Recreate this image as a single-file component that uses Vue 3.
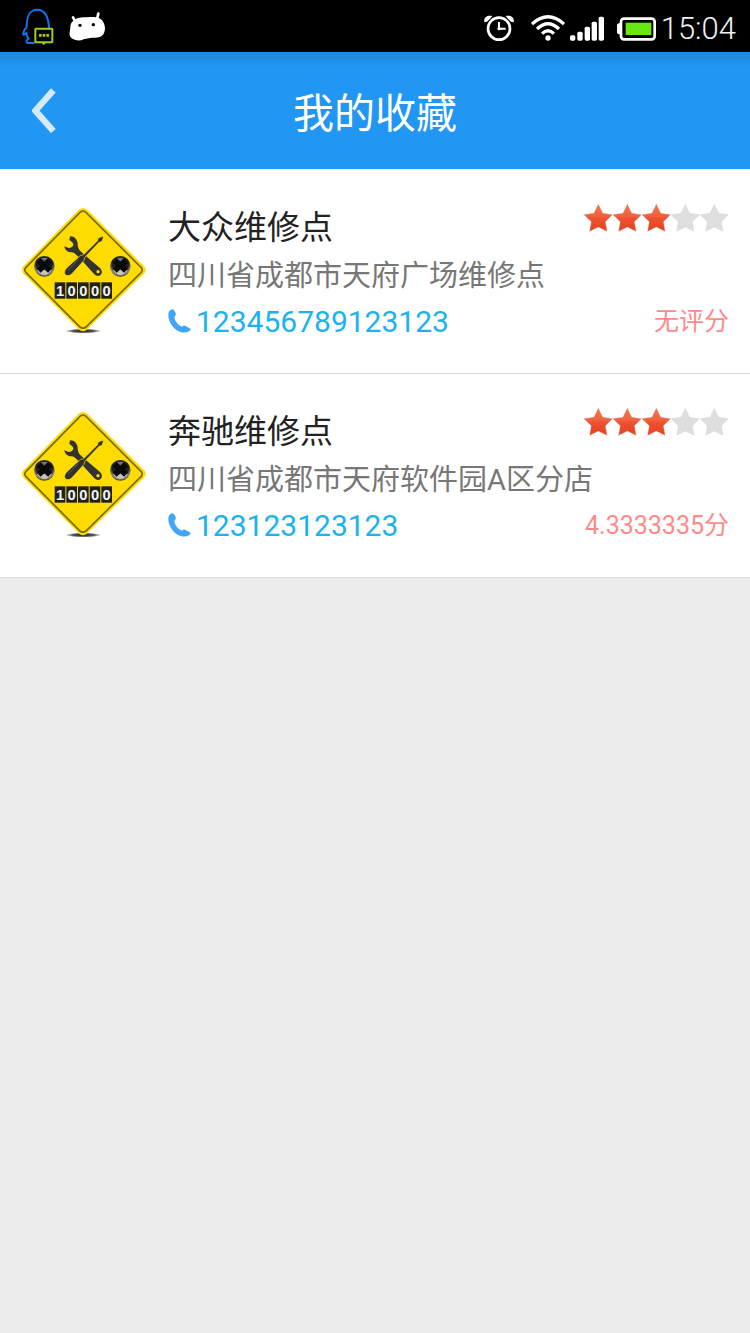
<template>
  <div class="page">
    <div class="status-bar">
      <div class="status-left">
        <svg class="icon-qq" viewBox="66 22 96 111" fill="none">
          <path d="M80 80 C80 45 88 27 112 27 C135 27 145 45 147 82 M80 80 C74 86 69 96 70 102 C72 104 76 99 79 97 C80 105 82 110 86 114 C78 119 77 126 84 127 L104 127" stroke="#0a78f0" stroke-width="6" />
          <rect x="106" y="84" width="51" height="41" rx="2" fill="#000" stroke="#a2cc14" stroke-width="6" />
          <path d="M124 126 L131 133 L138 126 Z" fill="#a2cc14" />
          <path d="M117 100h8v8h-8z M128 100h8v8h-8z M139 100h8v8h-8z" fill="#a2cc14" />
        </svg>
        <svg class="icon-android" viewBox="207 33 111 87">
          <path d="M219 49 L226 62 M295 38 L291 55" stroke="#fff" stroke-width="8" stroke-linecap="round" />
          <path d="M217 62 C229 49 246 49 260 49 C277 48 293 47 303 55 C313 63 317 80 314 90 C311 104 300 111 284 110 C272 110 261 112 251 115 C240 121 224 119 214 111 C205 103 210 90 211 81 C211 72 212 67 217 62 Z" fill="#fff" />
          <circle cx="240" cy="73" r="5" fill="#000" />
          <circle cx="280" cy="71" r="5" fill="#000" />
        </svg>
      </div>
      <div class="status-right">
        <svg class="icon-alarm" viewBox="42 43 93 78" fill="none" stroke="#fff">
          <circle cx="87" cy="84" r="33" stroke-width="8" />
          <path d="M87 64 V84 H107" stroke-width="6" />
          <circle cx="87" cy="84" r="5" fill="#fff" stroke="none" />
          <path d="M43 65 C40 50 52 42 67 46 L60 54 L51 63 Z M131 65 C134 50 122 42 107 46 L114 54 L123 63 Z" fill="#fff" stroke="none" />
        </svg>
        <svg class="icon-wifi" viewBox="183 43 102 78" fill="none" stroke="#fff" stroke-width="10">
          <path d="M186 70 Q234 27 282 70" />
          <path d="M201 85 Q234 53 267 85" />
          <path d="M216 99 Q234 81 252 99" />
          <circle cx="234" cy="112" r="8" fill="#fff" stroke="none" />
        </svg>
        <svg class="icon-signal" viewBox="300 43 102 78" fill="#fff">
          <rect x="300" y="104" width="16" height="16" rx="5" />
          <rect x="322" y="93" width="16" height="27" rx="5" />
          <rect x="344" y="78" width="16" height="42" rx="5" />
          <rect x="365" y="63" width="16" height="57" rx="5" />
          <rect x="386" y="48" width="16" height="72" rx="5" />
        </svg>
        <svg class="icon-battery" viewBox="441 43 117 78">
          <rect x="441" y="68" width="16" height="33" rx="6" fill="#fff" />
          <rect x="453" y="54" width="101" height="62" rx="9" fill="#000" stroke="#fff" stroke-width="8" />
          <rect x="467" y="66" width="77" height="37" fill="#68e810" />
        </svg>
        <span class="time">15:04</span>
      </div>
    </div>

    <header class="header">
      <button class="back" type="button" aria-label="返回">
        <svg viewBox="94 127 72 135">
          <path d="M158 134 L104 195 L158 256" fill="none" stroke="#d6eafd" stroke-width="19" />
        </svg>
      </button>
      <h1 class="title">我的收藏</h1>
    </header>

    <ul class="list">
      <li v-for="shop in shops" :key="shop.id" class="item">
        <svg class="sign" viewBox="30 36 384 384">
          <defs>
            <radialGradient id="bolt" cx="50%" cy="35%" r="65%">
              <stop offset="0" stop-color="#3a3a3a" />
              <stop offset="0.6" stop-color="#1c1c1c" />
              <stop offset="0.85" stop-color="#8d8a80" />
              <stop offset="1" stop-color="#403c20" />
            </radialGradient>
            <radialGradient id="ground">
              <stop offset="0" stop-color="#222" />
              <stop offset="0.6" stop-color="#555" />
              <stop offset="1" stop-color="#fff" />
            </radialGradient>
          </defs>
          <ellipse cx="220" cy="408" rx="54" ry="7" fill="url(#ground)" />
          <path d="M206 44 Q219 34 232 44 L402 213 Q412 224 402 236 L232 403 Q219 415 206 403 L41 236 Q31 224 41 213 Z" fill="#ffdc00" />
          <path d="M210 52 Q219 45 228 52 L393 217 Q400 225 393 233 L228 396 Q219 403 210 396 L48 233 Q41 225 48 217 Z" fill="none" stroke="#7a6a10" stroke-width="5" />
          <path d="M180 124 C192 123 203 134 203 147 C203 155 205 161 210 167 L224 180 L269 218 C280 228 277 241 264 243 Q258 243 253 238 L209 189 L195 176 C190 171 186 173 180 172 C171 170 164 164 163 154 L176 159 Q187 158 190 150 Q191 143 178 135 Z" fill="#333" />
          <circle cx="264" cy="230" r="5" fill="#ffdc00" />
          <path d="M264 130 L277 124 L280 128 L275 140 L268 141 L225 186 L222 196 L187 235 C179 244 168 243 165 238 C162 230 165 224 173 216 L212 181 L220 180 L263 137 Z" fill="#303030" stroke="#ffdc00" stroke-width="2" />
          <path d="M174 226 L205 193" stroke="#5a5a5a" stroke-width="3" />
          <g v-for="x in [103, 331]" :key="x">
            <circle :cx="x" cy="214" r="31" fill="url(#bolt)" />
            <path :d="`M${x - 22} 226 Q${x} 254 ${x + 22} 226 L${x} 222 Z`" fill="#c5c4bd" />
            <path :d="`M${x - 17} 197 L${x + 17} 227 M${x + 17} 197 L${x - 17} 227`" stroke="#0a0a0a" stroke-width="17" />
            <path :d="`M${x - 10} 190 Q${x} 186 ${x + 10} 190 L${x} 199 Z`" fill="#777" />
          </g>
          <g v-for="(digit, i) in '10000'" :key="i">
            <rect :x="134 + i * 35" y="262" width="32" height="49" fill="#202020" />
            <text :x="150 + i * 35" y="303" class="sign-digit">{{ digit }}</text>
          </g>
        </svg>
        <div class="info">
          <div class="line">
            <h2 class="name">{{ shop.name }}</h2>
            <div class="stars" role="img" :aria-label="`${shop.stars} / 5`">
              <svg v-for="n in 5" :key="n" class="star" viewBox="0 0 87 96">
                <defs>
                  <linearGradient id="starOn" x1="0" y1="0" x2="0" y2="1">
                    <stop offset="0" stop-color="#f8744f" />
                    <stop offset="0.45" stop-color="#f2603c" />
                    <stop offset="0.5" stop-color="#ee5230" />
                    <stop offset="1" stop-color="#e54120" />
                  </linearGradient>
                </defs>
                <path
                  d="M43 7 L56 34 L85 38 L64 59 L69 88 L43 75 L17 88 L22 59 L0 38 L30 34 Z"
                  :fill="n <= shop.stars ? 'url(#starOn)' : '#dedede'"
                  :stroke="n <= shop.stars ? '#c98b78' : '#cfcfcf'"
                />
              </svg>
            </div>
          </div>
          <p class="address">{{ shop.address }}</p>
          <div class="line">
            <a class="phone" :href="'tel:' + shop.phone">
              <svg class="icon-phone" viewBox="26 321 69 72">
                <path d="M42 322 L49 333 Q51 339 45 345 C46 358 57 370 68 374 Q74 368 80 373 L94 380 Q94 386 86 389 C68 396 51 386 41 374 C29 361 25 345 28 331 Q31 323 42 322 Z" fill="#42a5fa" />
              </svg>
              <span>{{ shop.phone }}</span>
            </a>
            <span class="score">{{ shop.score }}</span>
          </div>
        </div>
      </li>
    </ul>
  </div>
</template>

<script setup>
import { ref } from 'vue'

const shops = ref([
  {
    id: 1,
    name: '大众维修点',
    address: '四川省成都市天府广场维修点',
    phone: '123456789123123',
    stars: 3,
    score: '无评分'
  },
  {
    id: 2,
    name: '奔驰维修点',
    address: '四川省成都市天府软件园A区分店',
    phone: '123123123123',
    stars: 3,
    score: '4.3333335分'
  }
])
</script>

<style>
body {
  margin: 0;
  background: #ebebeb;
}
</style>

<style scoped>
.page {
  min-height: 100vh;
  background: #ebebeb;
  font-family: Roboto, 'Noto Sans CJK SC', sans-serif;
}

svg {
  display: block;
  flex: none;
}

.status-bar {
  display: flex;
  align-items: center;
  justify-content: space-between;
  height: 52px;
  padding: 0 14px 0 22px;
  background: #000;
  box-sizing: border-box;
}

.status-left {
  display: flex;
  align-items: center;
  gap: 15px;
}

.status-right {
  display: flex;
  align-items: center;
  padding-top: 3px;
}

.icon-qq {
  width: 32px;
  height: 37px;
}

.icon-android {
  width: 37px;
  height: 29px;
}

.icon-alarm {
  width: 31px;
  height: 26px;
  margin-right: 16px;
}

.icon-wifi {
  width: 34px;
  height: 26px;
  margin-right: 5px;
}

.icon-signal {
  width: 34px;
  height: 26px;
  margin-right: 13px;
}

.icon-battery {
  width: 39px;
  height: 26px;
  margin-right: 5px;
}

.time {
  padding-top: 2px;
  font-size: 31px;
  line-height: 32px;
  font-weight: 300;
  color: #f2f2f2;
}

.header {
  display: grid;
  grid-template-columns: 96px 1fr 96px;
  align-items: center;
  height: 117px;
  background: linear-gradient(#1e88dc, #2196f3 16px);
}

.back {
  height: 100%;
  padding: 0 32px;
  border: none;
  background: none;
  cursor: pointer;
}

.back svg {
  width: 24px;
  height: 45px;
}

.title {
  margin: 0;
  padding-top: 6px;
  font-size: 41px;
  line-height: 60px;
  font-weight: 400;
  text-align: center;
  color: #fff;
}

.list {
  margin: 0;
  padding: 1px 0 0;
  list-style: none;
  background: #fff;
}

.item {
  display: flex;
  align-items: flex-start;
  gap: 20px;
  padding: 32px 21px 27px 20px;
  border-bottom: 1px solid #d8d8d8;
}

.sign {
  width: 128px;
  height: 128px;
  margin-top: 5px;
}

.sign-digit {
  font-family: 'Liberation Sans', sans-serif;
  font-size: 44px;
  font-weight: 700;
  text-anchor: middle;
  fill: #f4f4f4;
}

.info {
  flex: 1;
  min-width: 0;
}

.line {
  display: flex;
  justify-content: space-between;
}

.name {
  margin: 0;
  padding-top: 2px;
  font-size: 33px;
  line-height: 48px;
  font-weight: 400;
  color: #222;
}

.stars {
  display: flex;
}

.star {
  width: 29px;
  height: 32px;
}

.address {
  margin: 0;
  font-size: 29px;
  line-height: 48px;
  color: #777;
}

.phone {
  display: flex;
  gap: 5px;
  font-size: 30px;
  line-height: 44px;
  color: #1ab2f0;
  text-decoration: none;
}

.icon-phone {
  width: 23px;
  height: 24px;
  margin-top: 9px;
}

.score {
  font-size: 25px;
  line-height: 44px;
  color: #ff8a8a;
}

.line:last-child {
  height: 46px;
}
</style>
